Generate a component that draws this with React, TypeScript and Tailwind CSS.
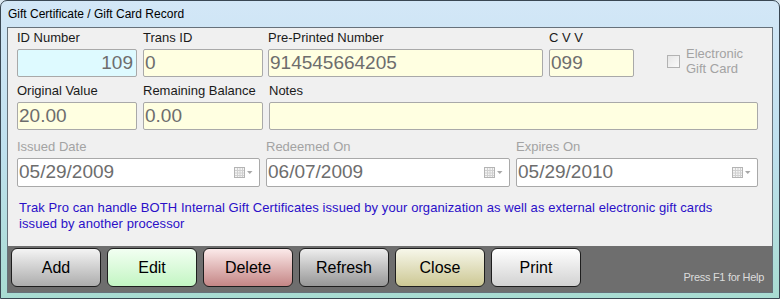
import React from 'react';

const font = { fontFamily: '"Liberation Sans", Arial, sans-serif' };

type FieldProps = {
  label: string;
  value?: string;
  width: string;
  bg?: string;
  align?: 'left' | 'right';
};

const Field: React.FC<FieldProps> = ({ label, value = '', width, bg = 'bg-[#ffffe1]', align = 'left' }) => (
  <div className={`flex flex-col ${width}`}>
    <div className="h-[19px] text-[13px] leading-[15px] text-[#1a1a1a] whitespace-nowrap">{label}</div>
    <div
      className={`h-[28px] border border-[#a9a9a9] rounded-[2px] ${bg} flex items-center px-[1px] text-[19px] text-[#6d6d6d] ${
        align === 'right' ? 'justify-end pr-[3px]' : ''
      }`}
    >
      {value}
    </div>
  </div>
);

const CalendarIcon = () => (
  <svg width="19" height="11" viewBox="0 0 19 11" className="shrink-0">
    <rect x="0.5" y="0.5" width="10" height="10" fill="#f4f4f4" stroke="#b4b4b4" />
    <path d="M1 3.5H10M1 6H10M1 8.5H10M3.5 1V10M6 1V10M8.5 1V10" stroke="#d0d0d0" strokeWidth="1" />
    <path d="M13 4H18.5L15.75 7Z" fill="#a8a8a8" />
  </svg>
);

const DateField: React.FC<{ label: string; value: string; width: string }> = ({ label, value, width }) => (
  <div className={`flex flex-col ${width}`}>
    <div className="h-[19px] text-[13px] leading-[15px] text-[#a3a3a3] whitespace-nowrap">{label}</div>
    <div className="h-[29px] border border-[#a9a9a9] rounded-[2px] bg-white flex items-center pl-[1px] pr-[6px] text-[19px] text-[#6d6d6d]">
      <span className="flex-1">{value}</span>
      <CalendarIcon />
    </div>
  </div>
);

const buttons = [
  { label: 'Add', cls: 'from-[#f4f4f4] to-[#adadad]' },
  { label: 'Edit', cls: 'from-[#f2fff2] to-[#c3f5c3]' },
  { label: 'Delete', cls: 'from-[#fbeaea] to-[#c48686]' },
  { label: 'Refresh', cls: 'from-[#eeeeee] to-[#979797]' },
  { label: 'Close', cls: 'from-[#f7f7ea] to-[#cdc894]' },
  { label: 'Print', cls: 'from-[#ffffff] to-[#d2d2d2]' },
];

export default function App() {
  return (
    <div className="w-[780px] h-[299px] bg-[#dbe8f2] overflow-hidden" style={font}>
      <div className="h-full flex flex-col border border-[#3a4753] rounded-t-[7px] bg-linear-to-b from-[#d3e7f7] via-[#bfe0ee] to-[#a8dcd2] px-[6px] pb-[5px]">
        {/* Title bar */}
        <div className="h-[26px] flex items-center pl-[1px] text-[12px] text-black">
          Gift Certificate / Gift Card Record
        </div>

        {/* Client area */}
        <div className="flex-1 flex flex-col border border-[#66717a]">
          <div className="flex-1 bg-[#f0f0f0] pl-[9px] pt-[2px]">
            {/* Row 1 */}
            <div className="flex">
              <Field label="ID Number" value="109" width="w-[120px]" bg="bg-[#defaff]" align="right" />
              <Field label="Trans ID" value="0" width="w-[120px] ml-[6px]" />
              <Field label="Pre-Printed Number" value="914545664205" width="w-[275px] ml-[5px]" />
              <Field label="C V V" value="099" width="w-[85px] ml-[6px]" />
              <div className="flex ml-[33px] pt-[24px] gap-[6px]">
                <div className="w-[13px] h-[13px] border border-[#b2b2b2] bg-linear-to-br from-[#e6e6e6] to-[#fafafa] mt-[1px]" />
                <div className="text-[13px] leading-[15px] text-[#a3a3a3] -mt-[8px]">
                  Electronic
                  <br />
                  Gift Card
                </div>
              </div>
            </div>

            {/* Row 2 */}
            <div className="flex mt-[6px]">
              <Field label="Original Value" value="20.00" width="w-[120px]" />
              <Field label="Remaining Balance" value="0.00" width="w-[120px] ml-[6px]" />
              <Field label="Notes" width="w-[489px] ml-[6px]" />
            </div>

            {/* Row 3 */}
            <div className="flex mt-[9px]">
              <DateField label="Issued Date" value="05/29/2009" width="w-[243px]" />
              <DateField label="Redeemed On" value="06/07/2009" width="w-[244px] ml-[6px]" />
              <DateField label="Expires On" value="05/29/2010" width="w-[242px] ml-[6px]" />
            </div>

            <p className="mt-[13px] ml-[2px] text-[13px] leading-[16px] tracking-[0.08px] text-[#2a0fc8] w-[740px]">
              Trak Pro can handle BOTH Internal Gift Certificates issued by your organization as well as external electronic gift cards
              <br />
              issued by another processor
            </p>
          </div>

          {/* Toolbar */}
          <div className="h-[46px] bg-[#6e6e6e] flex items-start pt-[2px] pl-[3px] pr-[8px]">
            <div className="flex gap-[6px]">
              {buttons.map((b) => (
                <button
                  key={b.label}
                  className={`w-[90px] h-[39px] border border-[#1e1e1e] rounded-[6px] bg-linear-to-b ${b.cls} text-[16px] text-black`}
                  style={font}
                >
                  {b.label}
                </button>
              ))}
            </div>
            <div className="ml-auto mt-[21px] text-[11px] tracking-[-0.3px] text-[#dcdcdc]">Press F1 for Help</div>
          </div>
        </div>
      </div>
    </div>
  );
}
